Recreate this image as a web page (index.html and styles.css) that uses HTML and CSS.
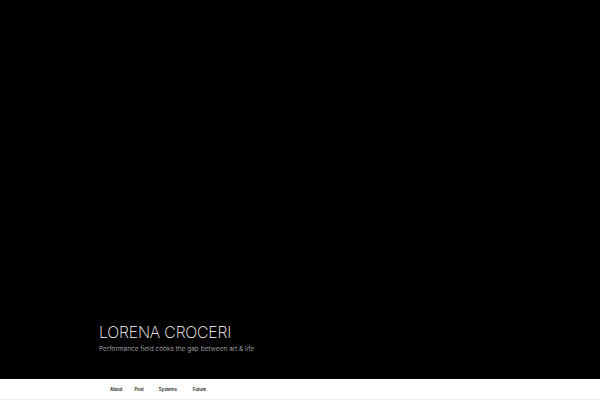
FILE: index.html
```
<!DOCTYPE html>
<html>
<head>
<meta charset="utf-8">
<link rel="stylesheet" href="styles.css">
</head>
<body>
<header class="hero">
  <div class="branding">
    <h1 class="site-title">LORENA CROCERI</h1>
    <p class="site-desc">Performance field cooks the gap between art &amp; life</p>
  </div>
</header>
<nav class="nav">
  <a href="#">About</a>
  <a href="#">Post</a>
  <a href="#">Systems</a>
  <a href="#">Future</a>
</nav>
</body>
</html>
```
FILE: styles.css
```
html, body { margin: 0; padding: 0; }
body {
  width: 600px; height: 400px; overflow: hidden;
  background: #fff;
  font-family: Inter, "Liberation Sans", sans-serif;
}
.hero {
  height: 379px;
  background: #000;
  display: flex;
  flex-direction: column;
  justify-content: flex-end;
}
.branding { padding: 0 0 25px 99px; }
.site-title {
  margin: 0;
  color: #fff;
  font-size: 15.8px;
  font-weight: 200;
  letter-spacing: -0.01em;
  line-height: 20px;
}
.site-desc {
  margin: 2px 0 0;
  color: #bbb;
  font-size: 6.6px;
  font-weight: 300;
  line-height: 9px;
}
.nav {
  display: flex;
  align-items: center;
  padding-left: 110px;
  border-bottom: 1px solid #eee;
  box-sizing: border-box;
  height: 21px;
}
.nav a {
  color: #222;
  text-decoration: none;
  font-size: 4.3px;
  font-weight: 600;
  margin-right: 12px;
}
.nav a:nth-child(2) { margin-right: 15px; }
.nav a:nth-child(3) { margin-right: 16px; }
```
